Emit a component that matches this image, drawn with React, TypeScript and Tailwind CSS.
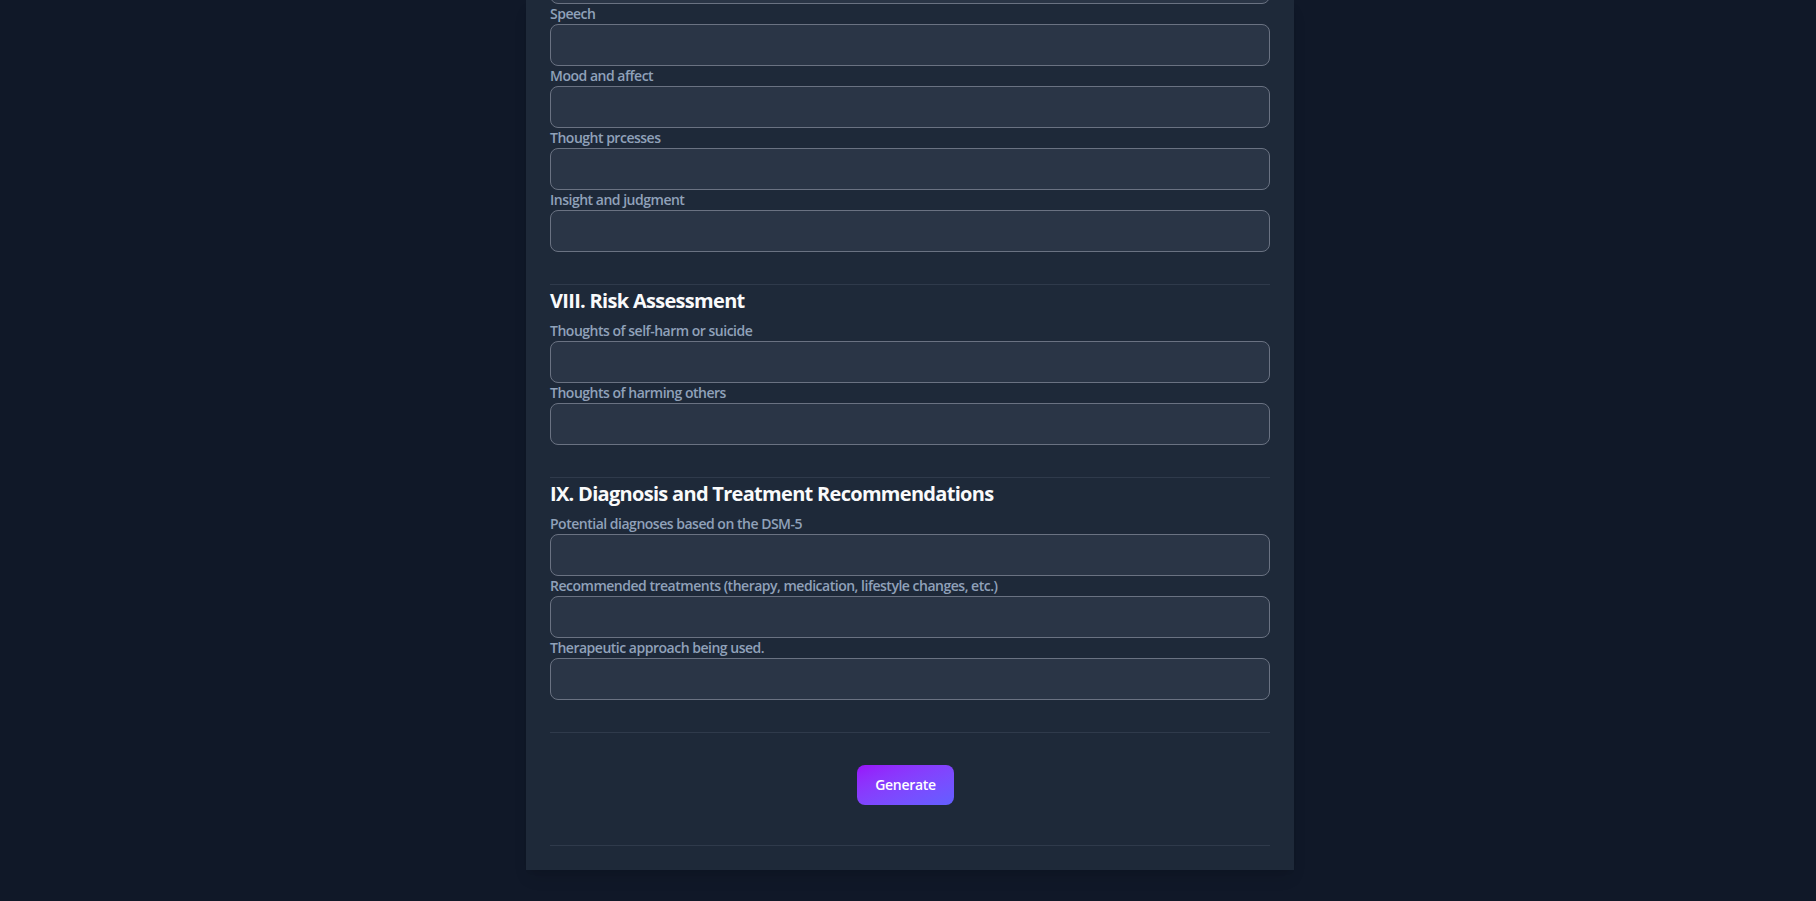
import React from "react";

const inputCls =
  "block h-[42px] w-full rounded-lg border border-gray-500 bg-gray-700/50 px-3 py-2 text-base text-gray-100 outline-none";

const Field = ({ label }: { label: string }) => (
  <div>
    <label className="block text-sm leading-5 font-semibold tracking-[-0.035em] text-slate-400">{label}</label>
    <input type="text" className={inputCls} />
  </div>
);

const Section = ({ title, fields, children }: { title?: string; fields: string[]; children?: React.ReactNode }) => (
  <section className="border-b border-gray-700/70 pb-8">
    {title && (
      <h2 className="mb-1.5 pt-0.5 text-xl leading-7 font-bold tracking-[-0.035em] text-gray-50">{title}</h2>
    )}
    {children}
    {fields.map((f) => (
      <Field key={f} label={f} />
    ))}
  </section>
);

export default function App() {
  return (
    <div className="min-h-screen bg-gray-900 pb-8 pl-1 font-['Open_Sans',sans-serif]">
      <div className="mx-auto flex max-w-3xl flex-col bg-gray-800 px-6 pb-6 shadow-lg">
        {/* tail of the mental status section, scrolled past */}
        <Section fields={["Speech", "Mood and affect", "Thought prcesses", "Insight and judgment"]}>
          <input type="text" className={`${inputCls} -mt-[38px]`} />
        </Section>
        <Section
          title="VIII. Risk Assessment"
          fields={["Thoughts of self-harm or suicide", "Thoughts of harming others"]}
        />
        <Section
          title="IX. Diagnosis and Treatment Recommendations"
          fields={[
            "Potential diagnoses based on the DSM-5",
            "Recommended treatments (therapy, medication, lifestyle changes, etc.)",
            "Therapeutic approach being used.",
          ]}
        />
        <div className="flex justify-center border-b border-gray-700/70 pt-8 pb-10">
          <button
            type="button"
            className="mr-[9px] h-10 rounded-lg bg-gradient-to-br from-purple-600 to-indigo-500 px-[18px] text-sm font-semibold tracking-[-0.02em] text-white"
          >
            Generate
          </button>
        </div>
      </div>
    </div>
  );
}
